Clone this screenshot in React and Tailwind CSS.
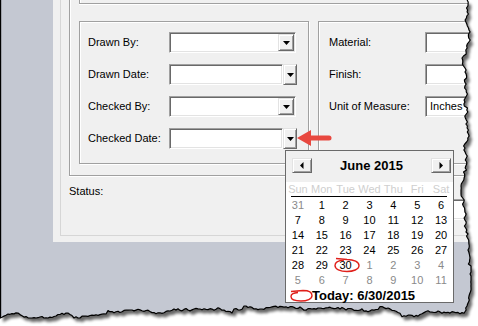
import React from "react";

function rnd(i) {
  const s = Math.sin(i * 12.9898 + 78.233) * 43758.5453;
  return s - Math.floor(s);
}

function tornPoints() {
  const pts = [];
  let x = 466;
  for (let y = 0; y <= 310; y += 2) {
    x += (rnd(y + 0.37) - 0.5) * 3.2;
    if (rnd(y + 9.1) > 0.93) x += (rnd(y + 3.3) - 0.5) * 5;
    x = Math.max(461, Math.min(471, x));
    pts.push([x, y]);
  }
  let yb = 312;
  for (let xx = Math.round(x) - 2; xx >= 0; xx -= 2) {
    yb += (rnd(xx + 1000.5) - 0.5) * 3.2;
    if (rnd(xx + 77.7) > 0.93) yb += (rnd(xx + 5.5) - 0.5) * 5;
    yb = Math.max(306, Math.min(318, yb));
    pts.push([xx, yb]);
  }
  return pts;
}

function TornOverlay() {
  const pts = tornPoints();
  const edge = pts.map((p) => `L${p[0].toFixed(1)},${p[1].toFixed(1)}`).join("");
  const last = pts[pts.length - 1];
  const inside = `M0,0${edge}L0,${last[1].toFixed(1)}Z`;
  const outside = `M-20,-20H500V350H-20Z${inside}`;
  const stroke = `M0.6,0L0.6,${last[1].toFixed(1)}` + pts
    .slice()
    .reverse()
    .map((p) => `L${p[0].toFixed(1)},${p[1].toFixed(1)}`)
    .join("");
  return (
    <svg className="absolute inset-0 pointer-events-none" width="478" height="326">
      <defs>
        <filter id="tblur" x="-10%" y="-10%" width="120%" height="120%">
          <feGaussianBlur stdDeviation="1.8" />
        </filter>
        <clipPath id="tout">
          <path d={outside} clipRule="evenodd" />
        </clipPath>
      </defs>
      <path d={outside} fill="#fff" fillRule="evenodd" />
      <g clipPath="url(#tout)">
        <path d={inside} fill="#000" opacity="0.6" transform="translate(3,4)" filter="url(#tblur)" />
      </g>
      <path d={stroke} fill="none" stroke="#000" strokeWidth="1.2" strokeLinejoin="round" />
    </svg>
  );
}

function Down() {
  return (
    <svg width="7" height="4" viewBox="0 0 7 4">
      <path d="M0 0h7l-3.5 4z" fill="#000" />
    </svg>
  );
}

function Sunken({ className = "", children }) {
  return (
    <div
      className={`bg-white border border-t-[#a0a0a0] border-l-[#a0a0a0] border-r-white border-b-white shadow-[inset_1px_1px_0_#696969,inset_-1px_-1px_0_#e3e3e3] ${className}`}
    >
      {children}
    </div>
  );
}

function Raised({ className = "", children }) {
  return (
    <div
      className={`flex items-center justify-center bg-[#f0f0f0] border border-t-[#e3e3e3] border-l-[#e3e3e3] border-r-[#696969] border-b-[#696969] shadow-[inset_1px_1px_0_#fff,inset_-1px_-1px_0_#a0a0a0] ${className}`}
    >
      {children}
    </div>
  );
}

function Combo() {
  return (
    <Sunken className="w-[127px] h-[21px] flex justify-end p-px">
      <Raised className="w-[16px] h-full">
        <Down />
      </Raised>
    </Sunken>
  );
}

function DateBox() {
  return (
    <div className="flex">
      <Sunken className="w-[114px] h-[21px]" />
      <Raised className="w-[14px] h-[21px]">
        <Down />
      </Raised>
    </div>
  );
}

function Row({ label, labelW, children }) {
  return (
    <div className="flex items-center h-[21px]">
      <div className={`${labelW} shrink-0`}>{label}</div>
      {children}
    </div>
  );
}

const group =
  "h-[143px] border border-[#a0a0a0] shadow-[inset_1px_1px_0_#fff,1px_1px_0_#fff] flex flex-col gap-[11px] pt-[10px]";

const weeks = [
  [[31, 1], [1], [2], [3], [4], [5], [6]],
  [[7], [8], [9], [10], [11], [12], [13]],
  [[14], [15], [16], [17], [18], [19], [20]],
  [[21], [22], [23], [24], [25], [26], [27]],
  [[28], [29], [30], [1, 1], [2, 1], [3, 1], [4, 1]],
  [[5, 1], [6, 1], [7, 1], [8, 1], [9, 1], [10, 1], [11, 1]],
];

function Calendar() {
  return (
    <div className="absolute left-[285px] top-[150px] w-[169px] h-[153px] border border-[#6a6a6a] bg-white text-[11px] leading-[13px]">
      <div className="h-[31px] bg-[#f0f0f0] flex items-start pt-[7px] pl-[6px] pr-[2px]">
        <Raised className="w-[20px] h-[15px]">
          <svg width="4" height="7" viewBox="0 0 4 7">
            <path d="M3.5 0v7L0 3.5z" fill="#000" />
          </svg>
        </Raised>
        <div className="flex-1 text-center font-bold text-[13px] leading-[15px] text-black">June 2015</div>
        <Raised className="w-[20px] h-[15px]">
          <svg width="4" height="7" viewBox="0 0 4 7">
            <path d="M0.5 0v7L4 3.5z" fill="#000" />
          </svg>
        </Raised>
      </div>
      <div className="grid grid-cols-7 h-[14px] items-center text-[#cfcfcf]">
        {["Sun", "Mon", "Tue", "Wed", "Thu", "Fri", "Sat"].map((d) => (
          <div key={d} className="text-center">
            {d}
          </div>
        ))}
      </div>
      <div className="h-px bg-black ml-[5px] mr-[6px]" />
      <div className="pt-px">
        {weeks.map((w, i) => (
          <div key={i} className="grid grid-cols-7 h-[15px] items-center">
            {w.map(([n, other], j) => (
              <div key={j} className={`text-center ${other ? "text-[#8a8a8a]" : "text-black"}`}>
                {n}
              </div>
            ))}
          </div>
        ))}
      </div>
      <div className="h-[14px] flex items-center pl-[26px] font-bold text-[13px] text-black">Today: 6/30/2015</div>
    </div>
  );
}

function Annotations() {
  return (
    <svg className="absolute inset-0 pointer-events-none" width="478" height="326">
      <path d="M297 138 L311 130 L311 146 Z" fill="#e8483f" />
      <path d="M309 138 L329 138" stroke="#e8483f" strokeWidth="5" strokeLinecap="round" />
      <path
        d="M336,258.5 L347,259.5 C354,259.5 359,262 359,265.5 C359,269.5 353,271.5 347,271.5 C340,271.5 335,269 335,265.5 C335,262.5 339,260.5 344,260"
        fill="none"
        stroke="#e0201b"
        strokeWidth="1.4"
      />
      <path
        d="M291,291.5 L303,290.5 C309,290.5 312,292.5 312,295.5 C312,299 307,301 301,301 C295,301 291,299.5 291,296.5 C291,294 294,292.8 298,292.5"
        fill="none"
        stroke="#e0201b"
        strokeWidth="1.4"
      />
    </svg>
  );
}

export default function App() {
  return (
    <div className="relative w-[478px] h-[326px] overflow-hidden bg-[#c4c8d2] font-['Liberation_Sans',Arial,sans-serif] text-[11px] leading-[13px] text-black">
      <div className="flex">
        <div className="w-[53px] shrink-0" />
        <div className="w-[425px] shrink-0 h-[242px] bg-[#f0f0f0] pl-[7px]">
          <div className="h-[236px] border-l border-b border-[#d6d6d6]">
            <div className="ml-[8px] h-[176px] border-l border-b border-[#a0a0a0] shadow-[inset_1px_0_0_#fff,0_1px_0_#fff]">
              <div className="ml-[9px] h-[4px] border-l border-b border-[#a0a0a0] shadow-[inset_1px_0_0_#fff,0_1px_0_#fff]" />
              <div className="mt-[17px] ml-[9px] flex">
                <div className={`${group} w-[230px] shrink-0 pl-[8px]`}>
                  <Row label="Drawn By:" labelW="w-[81px]">
                    <Combo />
                  </Row>
                  <Row label="Drawn Date:" labelW="w-[81px]">
                    <DateBox />
                  </Row>
                  <Row label="Checked By:" labelW="w-[81px]">
                    <Combo />
                  </Row>
                  <Row label="Checked Date:" labelW="w-[81px]">
                    <DateBox />
                  </Row>
                </div>
                <div className={`${group} ml-[9px] w-[200px] shrink-0 pl-[10px]`}>
                  <Row label="Material:" labelW="w-[96px]">
                    <Sunken className="w-[100px] h-[21px]" />
                  </Row>
                  <Row label="Finish:" labelW="w-[96px]">
                    <Sunken className="w-[100px] h-[21px]" />
                  </Row>
                  <Row label="Unit of Measure:" labelW="w-[96px]">
                    <Sunken className="w-[100px] h-[21px] flex items-center pl-[4px]">Inches</Sunken>
                  </Row>
                </div>
              </div>
            </div>
            <div className="flex mt-[9px] ml-[8px]">
              <div className="w-[356px] shrink-0">Status:</div>
              <Sunken className="mt-[14px] w-[100px] h-[21px]" />
            </div>
          </div>
        </div>
      </div>
      <Calendar />
      <Annotations />
      <TornOverlay />
    </div>
  );
}
